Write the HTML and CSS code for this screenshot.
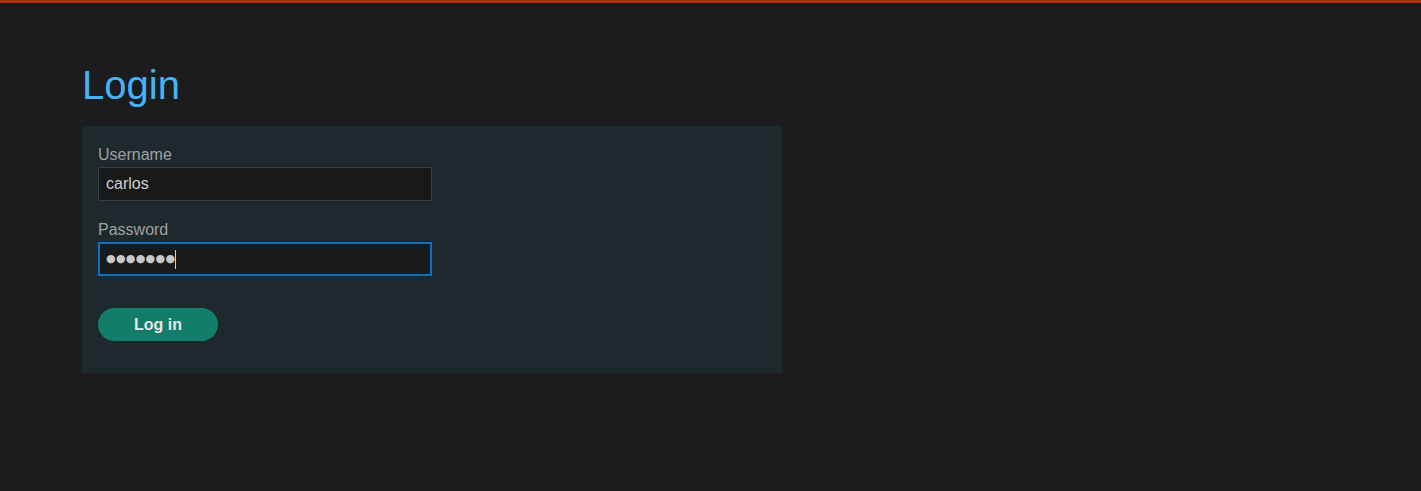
FILE: index.html
```html
<!DOCTYPE html>
<html lang="en">
<head>
    <meta charset="UTF-8">
    <meta name="viewport" content="width=device-width, initial-scale=1.0">
    <title>Login</title>
    <link rel="stylesheet" href="styles.css">
</head>
<body>
    <div class="top-bar"></div>
    <div class="container">
        <h1>Login</h1>
        <form class="login-form">
            <label for="username">Username</label>
            <input type="text" id="username" value="carlos">
            <label for="password">Password</label>
            <div class="input focused"><span class="dots">●●●●●●●</span><span class="caret"></span></div>
            <button type="button">Log in</button>
        </form>
    </div>
</body>
</html>
```

FILE: styles.css
```css
body {
    font-family: "Liberation Sans", Arial, sans-serif;
    background-color: #1b1c1e;
    margin: 0;
    padding: 0;
    height: 100vh;
}
.top-bar {
    height: 3px;
    background-color: #b02e0c;
}
.container {
    padding: 0 82px;
}
h1 {
    margin: 59px 0 18px;
    font-size: 40px;
    font-weight: normal;
    line-height: 46px;
    color: #45b3f5;
}
.login-form {
    width: 700px;
    box-sizing: border-box;
    background-color: #1e292e;
    padding: 19px 16px 32px;
    display: flex;
    flex-direction: column;
    align-items: flex-start;
}
.login-form label {
    font-size: 16px;
    line-height: 20px;
    color: #a0a0a0;
    margin-bottom: 2px;
}
.login-form input,
.login-form .input {
    width: 334px;
    height: 34px;
    box-sizing: border-box;
    background-color: #18191b;
    border: 1px solid #3c3f42;
    color: #cfcfcf;
    font-family: inherit;
    font-size: 16px;
    padding: 0 7px;
    margin: 0 0 19px;
    outline: none;
}
.login-form .input.focused {
    border: 2px solid #0c6fbf;
    padding: 0 6px;
    margin-bottom: 18px;
    display: flex;
    align-items: center;
}
.dots {
    font-family: "DejaVu Sans", sans-serif;
    font-size: 11px;
    color: #c8c8c8;
    letter-spacing: 0.3px;
    line-height: 20px;
}
.caret {
    width: 1px;
    height: 19px;
    background-color: #d0d0d0;
}
.login-form button {
    margin-top: 14px;
    width: 120px;
    height: 33px;
    border: none;
    border-radius: 17px;
    background-color: #127e69;
    color: #e6e6e6;
    font-family: inherit;
    font-size: 16px;
    font-weight: bold;
    cursor: pointer;
}
```
